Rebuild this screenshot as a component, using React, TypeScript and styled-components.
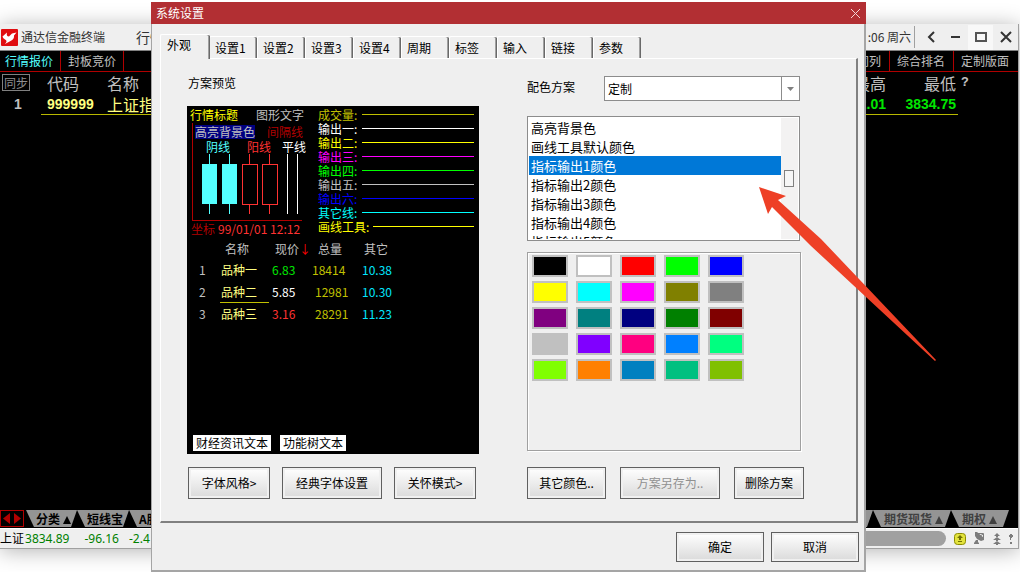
import React, { useState } from "react";
import styled, { createGlobalStyle } from "styled-components";

const GlobalStyle = createGlobalStyle`
  *, *::before, *::after { box-sizing: border-box; }
  body {
    margin: 0;
    background: #fff;
    font-family: "Noto Sans CJK SC", "Liberation Sans", sans-serif;
    font-size: 12px;
    line-height: 14px;
    color: #000;
  }
  button, select { font: inherit; color: inherit; margin: 0; border-radius: 0; }
`;

const Page = styled.div`
  position: relative;
  display: flow-root;
  min-height: 100vh;
  overflow: hidden;
`;

/* ---------- terminal window ---------- */

const Terminal = styled.main`
  display: flex;
  flex-direction: column;
  min-height: calc(100vh - 47px);
  margin: 24px 1px 23px 0;
  background: #000;
  border-right: 1px solid #a0a0a0;
  border-bottom: 1px solid #a0a0a0;
  box-shadow: 0 2px 20px rgba(0, 0, 0, 0.3);
`;

const Split = styled.div`
  display: flex;
  justify-content: space-between;
`;

const Caption = styled(Split)`
  height: 27px;
  background: #efefef;
  color: #333;
  border-bottom: 1px solid #808080;
`;

const CaptionGroup = styled.div`
  display: flex;
  align-items: center;
`;

const Brand = styled.span`
  display: flex;
  align-items: center;
  gap: 3px;
  padding-left: 1px;
  margin-right: 31px;
`;

const MenuText = styled.span`
  font-size: 14px;
`;

const Clock = styled.span`
  padding-right: 3px;
  margin-right: 3px;
  border-right: 1px solid #a0a0a0;
  line-height: 22px;
`;

const CaptionButton = styled.button<{ $lit?: boolean }>`
  display: grid;
  place-items: center;
  width: 25px;
  height: 25px;
  padding: 0;
  border: 0;
  background: ${(p) => (p.$lit ? "#f8f8f8" : "transparent")};
`;

const ViewBar = styled(Split)`
  height: 21px;
  border-bottom: 1px solid #b00000;
`;

const ViewGroup = styled.div<{ $end?: boolean }>`
  display: flex;
  padding-right: ${(p) => (p.$end ? 1 : 0)}px;
`;

const ViewTab = styled.button<{ $active?: boolean; $side: "left" | "right" }>`
  padding: ${(p) => (p.$side === "left" ? "0 7px 0 5px" : "0 8px 0 7px")};
  border: 0 solid #b00000;
  border-right-width: ${(p) => (p.$side === "left" ? 1 : 0)}px;
  border-left-width: ${(p) => (p.$side === "right" ? 1 : 0)}px;
  background: none;
  color: ${(p) => (p.$active ? "#54ffff" : "#c0c0c0")};
  & + & { padding-left: 7px; }
`;

const Quotes = styled.table`
  width: 100%;
  table-layout: fixed;
  border-collapse: separate;
  border-spacing: 0;
  font-size: 16px;
  line-height: 16px;
  color: #c0c0c0;
  th, td {
    height: 21px;
    padding: 0;
    font-weight: 400;
    text-align: left;
    vertical-align: middle;
    white-space: nowrap;
  }
  tbody td { height: 22px; border-bottom: 1px solid #b8b800; }
  tbody td:first-child, tbody td:last-child { border-bottom-color: transparent; }
`;

const Col = styled.col<{ $w?: number }>`
  width: ${(p) => (p.$w ? p.$w + "px" : "auto")};
`;

const CodeHead = styled.th`
  && { padding-left: 6px; }
`;

const CodeCell = styled.td`
  && { padding-left: 6px; }
`;

const NumHead = styled.th`
  && { text-align: right; padding-right: 2px; }
`;

const NumCell = styled.td`
  && { text-align: right; padding-right: 2px; }
`;

const IndexCell = styled.td`
  && { padding-left: 14px; }
`;

const NameCell = styled.td`
  color: #ffff80;
`;

const Digits = styled.span<{ $color: string }>`
  display: block;
  font-family: "Liberation Sans", sans-serif;
  font-size: 14px;
  font-weight: 700;
  color: ${(p) => p.$color};
`;

const HelpMark = styled.span`
  display: block;
  padding-left: 3px;
  font-family: "Liberation Mono", monospace;
  font-size: 13px;
  font-weight: 700;
`;

const SyncButton = styled.button`
  display: block;
  height: 17px;
  margin-left: 2px;
  padding: 0 1px;
  border: 1px solid #808080;
  background: none;
  color: #909090;
  font-size: 12px;
  line-height: 14px;
`;

const Grow = styled.div`
  flex: 1;
`;

const SheetBar = styled(Split)`
  height: 18px;
  padding-bottom: 1px;
`;

const SheetGroup = styled.div<{ $end?: boolean }>`
  display: flex;
  padding-right: ${(p) => (p.$end ? 9 : 0)}px;
`;

const Pager = styled.span`
  display: flex;
  width: 24px;
  margin-right: 2px;
  border: 1px solid #b00000;
  button { flex: 1; padding: 0; border: 0; background: none; display: grid; place-items: center; }
`;

const SheetTab = styled.button<{ $dim?: boolean }>`
  height: 17px;
  padding: ${(p) => (p.$dim ? "0 8px 0 11px" : "0 6px 0 10px")};
  border: 0;
  background: #949494;
  clip-path: polygon(0 0, 100% 0, calc(100% - 6px) 100%, 8px 100%);
  color: ${(p) => (p.$dim ? "#404040" : "#000")};
  font-weight: 700;
  line-height: 17px;
  white-space: nowrap;
  &:last-child { padding-right: 12px; }
`;

const Triangle = styled.span`
  display: inline-block;
  margin-left: 3px;
  border: 4px solid transparent;
  border-top: 0;
  border-bottom: 8px solid currentColor;
`;

const StatusBar = styled(Split)`
  align-items: center;
  height: 20px;
  background: #efefef;
  border-top: 1px solid #fff;
`;

const StatusText = styled.div`
  display: flex;
  color: #008000;
  font-family: "Noto Sans", "Noto Sans CJK SC", sans-serif;
  white-space: nowrap;
`;

const StatusItem = styled.span<{ $gap?: number; $color?: string }>`
  padding-right: ${(p) => p.$gap ?? 0}px;
  color: ${(p) => p.$color ?? "inherit"};
`;

const StatusTools = styled.div`
  display: flex;
  align-items: center;
  gap: 8px;
  padding-right: 5px;
`;

const Marquee = styled.div`
  width: 120px;
  height: 15px;
  border-radius: 8px;
  background: #a0a0a0;
`;

/* ---------- settings dialog ---------- */

const Dialog = styled.section`
  position: absolute;
  top: 2px;
  left: 151px;
  right: 154px;
  min-width: 715px;
  background: #efefef;
  border: solid #a5a5a5;
  border-width: 0 2px 2px 1px;
`;

const DialogTitle = styled.header`
  display: flex;
  align-items: center;
  justify-content: space-between;
  height: 22px;
  margin: 0 -2px 0 -1px;
  padding: 0 5px;
  background: #b22f33;
  color: #fff;
  h1 { margin: 0; font-size: 12px; font-weight: 400; }
  button { display: grid; padding: 0; border: 0; background: none; }
`;

const TabStrip = styled.div`
  display: flex;
  align-items: flex-end;
  height: 34px;
  padding-left: 8px;
`;

const Tab = styled.button<{ $active?: boolean }>`
  position: relative;
  z-index: ${(p) => (p.$active ? 1 : 0)};
  width: ${(p) => (p.$active ? 50 : 48)}px;
  height: ${(p) => (p.$active ? 25 : 22)}px;
  margin-bottom: ${(p) => (p.$active ? -1 : 0)}px;
  padding: 0 0 ${(p) => (p.$active ? 4 : 0)}px ${(p) => (p.$active ? 6 : 5)}px;
  border: solid #fff;
  border-width: 1px 0 0 1px;
  border-radius: 2px 2px 0 0;
  background: #efefef;
  box-shadow: inset -1px 0 #696969, inset -2px 0 #a0a0a0;
  text-align: left;
  &:first-child { margin-right: -1px; }
`;

const Panel = styled.div`
  display: grid;
  grid-template-columns: minmax(292px, 1fr) 277px;
  gap: 48px;
  margin: 0 6px 0 8px;
  padding: 15px 52px 22px 26px;
  border: solid;
  border-width: 1px 2px 2px 1px;
  border-color: #fff #808080 #808080 #fff;
`;

const Column = styled.div`
  display: flex;
  flex-direction: column;
`;

const SectionLabel = styled.h2`
  margin: 0 0 14px 1px;
  font-size: 12px;
  font-weight: 400;
  line-height: 18px;
`;

const ButtonRow = styled.div<{ $gap: number; $top: number; $inset?: number }>`
  display: flex;
  gap: ${(p) => p.$gap}px;
  margin-top: ${(p) => p.$top}px;
  padding-left: ${(p) => p.$inset ?? 0}px;
`;

const PushButton = styled.button<{ $w: number; $h?: number }>`
  width: ${(p) => p.$w}px;
  height: ${(p) => p.$h ?? 32}px;
  padding: 0 0 1px;
  border: 1px solid #606060;
  background: linear-gradient(#fff, #dadada);
  box-shadow: inset 0 0 0 2px #f0f0f0;
  white-space: nowrap;
  &:disabled { color: #909090; }
`;

const DialogFooter = styled.footer`
  display: flex;
  justify-content: flex-end;
  gap: 7px;
  padding: 9px 5px 8px;
`;

/* ---------- preview ---------- */

const Preview = styled.div`
  display: flex;
  flex-direction: column;
  min-height: 348px;
  padding: 2px 5px 3px 3px;
  background: #000;
  color: #c0c0c0;
  white-space: nowrap;
`;

const PreviewTop = styled.div`
  display: grid;
  grid-template-columns: 128px 1fr;
`;

const Inline = styled.div<{ $gap: number; $left?: number }>`
  display: flex;
  gap: ${(p) => p.$gap}px;
  padding-left: ${(p) => p.$left ?? 0}px;
`;

const Ink = styled.span<{ $color: string }>`
  color: ${(p) => p.$color};
`;

const Highlight = styled.span`
  background: #000080;
`;

const CandleBox = styled.div`
  width: 110px;
  margin: 1px 0 1px 2px;
  padding-top: 2px;
  border: solid #b00000;
  border-width: 0 0 1px 1px;
  svg { display: block; margin-bottom: 5px; }
`;

const CandleLabels = styled.div`
  display: grid;
  grid-template-columns: 41px 35px 24px;
  padding: 1px 0 0 13px;
`;

const Legend = styled.div`
  display: flex;
  flex-direction: column;
`;

const LegendRow = styled.div<{ $color: string }>`
  display: flex;
  align-items: center;
  gap: 4px;
  color: ${(p) => p.$color};
  &::after {
    content: "";
    flex: 1;
    height: 1px;
    margin-bottom: 1px;
    background: currentColor;
  }
`;

const LegendText = styled.span`
  min-width: 40px;
`;

const PreviewTable = styled.table`
  width: 200px;
  margin: 3px 0 0 9px;
  table-layout: fixed;
  border-collapse: separate;
  border-spacing: 0;
  th { height: 20px; padding: 0; font-weight: 400; }
  td { height: 22px; padding: 0; }
`;

const PCell = styled.td<{ $color?: string; $marked?: boolean; $left?: number }>`
  && {
    padding-left: ${(p) => p.$left ?? 0}px;
    color: ${(p) => p.$color ?? "#c0c0c0"};
    border-bottom: 1px solid ${(p) => (p.$marked ? "#c0c000" : "transparent")};
  }
`;

const PHead = styled.th<{ $left: number }>`
  && { padding-left: ${(p) => p.$left}px; text-align: left; }
`;

const TagRow = styled.div`
  display: flex;
  gap: 9px;
  margin-top: auto;
  padding-left: 3px;
`;

const Tag = styled.span`
  padding: 1px 3px;
  background: #fff;
  color: #000;
`;

/* ---------- colour scheme side ---------- */

const SchemeRow = styled.div`
  display: flex;
  align-items: center;
  width: 273px;
  height: 25px;
  margin: 2px 0 15px;
  label { width: 77px; padding-bottom: 3px; }
`;

const DropWrap = styled.div`
  position: relative;
  flex: 1;
  height: 25px;
  svg { position: absolute; top: 1px; right: 1px; pointer-events: none; }
`;

const Drop = styled.select`
  appearance: none;
  width: 100%;
  height: 100%;
  padding: 0 20px 0 3px;
  border: 1px solid #8c8c8c;
  background: #fff;
  outline: 0;
`;

const ListFrame = styled.div`
  display: flex;
  width: 273px;
  height: 125px;
  padding: 1px;
  border: 1px solid #8c8c8c;
  background: #fff;
`;

const ItemList = styled.select`
  appearance: none;
  flex: 1;
  height: 121px;
  padding: 0;
  border: 0;
  outline: 0;
  overflow: hidden;
  background: #fff;
  font-size: 13px;
  scrollbar-width: none;
  option { height: 19px; min-height: 19px; padding: 0 2px; line-height: 19px; }
  option:checked {
    background: #0078d7 linear-gradient(#0078d7, #0078d7);
    -webkit-text-fill-color: #fff;
  }
`;

const ScrollTrack = styled.div`
  width: 17px;
  padding: 52px 4px 0 3px;
  background: #f3f2f2;
  &::before {
    content: "";
    display: block;
    height: 17px;
    border: 1px solid #808080;
    background: #f6f6f6;
  }
`;

const Palette = styled.div`
  display: grid;
  grid-template-columns: repeat(5, 36px);
  grid-auto-rows: 22px;
  gap: 4px 8px;
  width: 274px;
  height: 199px;
  margin-top: 11px;
  padding: 2px 4px;
  border: 1px solid #a0a0a0;
  box-shadow: 1px 1px #fff, inset 1px 1px #fff;
`;

const Swatch = styled.button<{ $color: string }>`
  padding: 0;
  border: 2px solid #c0c0c0;
  background: ${(p) => p.$color};
`;

const PointerArrow = styled.svg`
  position: absolute;
  top: 184px;
  left: 606px;
  pointer-events: none;
`;

const tabs = ["外观", "设置1", "设置2", "设置3", "设置4", "周期", "标签", "输入", "链接", "参数"];

const legend: [string, string][] = [
  ["成交量:", "#c0c000"],
  ["输出一:", "#ffffff"],
  ["输出二:", "#ffff00"],
  ["输出三:", "#ff00ff"],
  ["输出四:", "#00ff00"],
  ["输出五:", "#c0c0c0"],
  ["输出六:", "#0000ff"],
  ["其它线:", "#00ffff"],
  ["画线工具:", "#ffff00"],
];

const rows = [
  { name: "品种一", price: "6.83", color: "#00e600", volume: "18414", other: "10.38" },
  { name: "品种二", price: "5.85", color: "#ffffff", volume: "12981", other: "10.30" },
  { name: "品种三", price: "3.16", color: "#ff3232", volume: "28291", other: "11.23" },
];

const items = [
  "高亮背景色",
  "画线工具默认颜色",
  "指标输出1颜色",
  "指标输出2颜色",
  "指标输出3颜色",
  "指标输出4颜色",
  "指标输出5颜色",
];

const palette = [
  "#000000", "#ffffff", "#ff0000", "#00ff00", "#0000ff",
  "#ffff00", "#00ffff", "#ff00ff", "#808000", "#808080",
  "#800080", "#008080", "#000080", "#008000", "#800000",
  "#c0c0c0", "#8000ff", "#ff0080", "#0080ff", "#00ff80",
  "#80ff00", "#ff8000", "#0080c0", "#00c080", "#80c000",
];

function Logo() {
  return (
    <svg width="17" height="17" viewBox="0 0 17 17" aria-hidden="true">
      <rect width="17" height="17" rx="1" fill="#e00d10" />
      <path
        d="M1.500 7.500 6 3.500Q5 7.500 8 7.500L11 4.500 15.500 3.500 13 6.500Q13.500 10 9.500 12L4 15Q7 12 4 10.500 2 9.500 1.500 7.500Z"
        fill="#fff"
      />
    </svg>
  );
}

function Candles() {
  return (
    <svg width="109" height="61" viewBox="0 0 109 61" shapeRendering="crispEdges" aria-hidden="true">
      <g fill="#54ffff">
        <rect x="9" y="10" width="15" height="40" />
        <rect x="16" y="0" width="1" height="60" />
        <rect x="29" y="10" width="15" height="40" />
        <rect x="36" y="0" width="1" height="60" />
      </g>
      <g fill="none" stroke="#ff3232">
        <rect x="49.5" y="10.5" width="15" height="40" />
        <path d="M56.5 0V10M56.500 51V60" />
        <rect x="69.5" y="10.5" width="15" height="40" />
        <path d="M76.5 0V10M76.500 51V60" />
      </g>
      <path d="M94.5 0V60M104.500 0V60" stroke="#fff" />
    </svg>
  );
}

function TrayIcons() {
  return (
    <>
      <svg width="12" height="12" viewBox="0 0 12 12" aria-hidden="true">
        <rect x="0.500" y="0.500" width="11" height="11" rx="3" fill="#e2e23c" stroke="#8c8c00" />
        <path d="M6 2 9 5H7V7H5V5H3ZM4 8H8V9H4Z" fill="#707000" />
      </svg>
      <svg width="11" height="13" viewBox="0 0 11 13" fill="#7c7c7c" aria-hidden="true">
        <path d="M1 0H3L10 6V8L7 9 3 7 1 4Z" />
        <path d="M4 1.500H9.500V7M5 5 9 2" fill="none" stroke="#7c7c7c" />
        <path d="M2 8H4V10L5 11V12H0V11Z" />
      </svg>
      <svg width="8" height="12" viewBox="0 0 8 12" fill="#7c7c7c" aria-hidden="true">
        <path d="M4 0 7 3H1ZM3 3H5V4H3ZM4 4 8 7H0ZM3 7H5V8H3ZM4 8 8 11H0ZM3 11H5V12H3Z" />
      </svg>
      <svg width="4" height="12" viewBox="0 0 4 12" fill="#7c7c7c" aria-hidden="true">
        <path d="M1 1H3V5H1ZM0 2H4V4H0ZM1 5H2V7H1ZM1 9H3V11H1Z" />
      </svg>
    </>
  );
}

function TerminalWindow() {
  return (
    <Terminal>
      <Caption>
        <CaptionGroup>
          <Brand>
            <Logo />
            通达信金融终端
          </Brand>
          <MenuText>行情</MenuText>
        </CaptionGroup>
        <CaptionGroup>
          <Clock>:06 周六</Clock>
          <CaptionButton aria-label="后退">
            <svg width="8" height="12" fill="none" stroke="#333" strokeWidth="2">
              <path d="M7 1 2 6 7 11" />
            </svg>
          </CaptionButton>
          <CaptionButton aria-label="最小化">
            <svg width="10" height="10" fill="none" stroke="#333" strokeWidth="2">
              <path d="M0 5H9" />
            </svg>
          </CaptionButton>
          <CaptionButton aria-label="最大化" $lit>
            <svg width="12" height="12" fill="none" stroke="#555" strokeWidth="2">
              <rect x="1" y="2" width="10" height="8" />
            </svg>
          </CaptionButton>
          <CaptionButton aria-label="关闭">
            <svg width="12" height="12" fill="none" stroke="#333" strokeWidth="2">
              <path d="M1 1 11 11M11 1 1 11" />
            </svg>
          </CaptionButton>
        </CaptionGroup>
      </Caption>
      <ViewBar>
        <ViewGroup>
          <ViewTab $side="left" $active>行情报价</ViewTab>
          <ViewTab $side="left">封板竞价</ViewTab>
        </ViewGroup>
        <ViewGroup $end>
          <ViewTab $side="right">同列</ViewTab>
          <ViewTab $side="right">综合排名</ViewTab>
          <ViewTab $side="right">定制版面</ViewTab>
        </ViewGroup>
      </ViewBar>
      <Quotes>
        <colgroup>
          <Col $w={41} />
          <Col $w={66} />
          <Col />
          <Col $w={60} />
          <Col $w={70} />
          <Col $w={60} />
        </colgroup>
        <thead>
          <tr>
            <th><SyncButton>同步</SyncButton></th>
            <CodeHead>代码</CodeHead>
            <th>名称</th>
            <NumHead>最高</NumHead>
            <NumHead>最低</NumHead>
            <th><HelpMark>?</HelpMark></th>
          </tr>
        </thead>
        <tbody>
          <tr>
            <IndexCell><Digits $color="#c0c0c0">1</Digits></IndexCell>
            <CodeCell><Digits $color="#ffff80">999999</Digits></CodeCell>
            <NameCell>上证指数</NameCell>
            <NumCell><Digits $color="#00e600">2.01</Digits></NumCell>
            <NumCell><Digits $color="#00e600">3834.75</Digits></NumCell>
            <td />
          </tr>
        </tbody>
      </Quotes>
      <Grow />
      <SheetBar>
        <SheetGroup>
          <Pager>
            <button aria-label="向左">
              <svg width="7" height="11"><path d="M7 0V11L0 5.500Z" fill="#b00000" /></svg>
            </button>
            <button aria-label="向右">
              <svg width="7" height="11"><path d="M0 0V11L7 5.500Z" fill="#b00000" /></svg>
            </button>
          </Pager>
          <SheetTab>分类<Triangle /></SheetTab>
          <SheetTab>短线宝</SheetTab>
          <SheetTab>A股</SheetTab>
        </SheetGroup>
        <SheetGroup $end>
          <SheetTab $dim>其它<Triangle /></SheetTab>
          <SheetTab $dim>期货现货<Triangle /></SheetTab>
          <SheetTab $dim>期权<Triangle /></SheetTab>
        </SheetGroup>
      </SheetBar>
      <StatusBar>
        <StatusText>
          <StatusItem $color="#000" $gap={1}>上证</StatusItem>
          <StatusItem $gap={15}>3834.89</StatusItem>
          <StatusItem $gap={10}>-96.16</StatusItem>
          <StatusItem>-2.4</StatusItem>
        </StatusText>
        <StatusTools>
          <Marquee />
          <TrayIcons />
        </StatusTools>
      </StatusBar>
    </Terminal>
  );
}

function SchemePreview() {
  return (
    <Preview>
      <PreviewTop>
        <div>
          <Inline $gap={18}>
            <Ink $color="#ffff00">行情标题</Ink>
            <span>图形文字</span>
          </Inline>
          <CandleBox>
            <Inline $gap={12} $left={2}>
              <Highlight>高亮背景色</Highlight>
              <Ink $color="#b00000">间隔线</Ink>
            </Inline>
            <CandleLabels>
              <Ink $color="#54ffff">阴线</Ink>
              <Ink $color="#ff3232">阳线</Ink>
              <Ink $color="#ffffff">平线</Ink>
            </CandleLabels>
            <Candles />
          </CandleBox>
          <Inline $gap={3} $left={1}>
            <Ink $color="#b00000">坐标</Ink>
            <Ink $color="#ff3232">99/01/01 12:12</Ink>
          </Inline>
        </div>
        <Legend>
          {legend.map(([text, color]) => (
            <LegendRow key={text} $color={color}>
              <LegendText>{text}</LegendText>
            </LegendRow>
          ))}
        </Legend>
      </PreviewTop>
      <PreviewTable>
        <colgroup>
          <Col $w={21} />
          <Col $w={49} />
          <Col $w={40} />
          <Col $w={50} />
          <Col $w={40} />
        </colgroup>
        <thead>
          <tr>
            <PHead $left={0} aria-label="序号" />
            <PHead $left={5}>名称</PHead>
            <PHead $left={6}>现价<Ink $color="#ff0000">↓</Ink></PHead>
            <PHead $left={9}>总量</PHead>
            <PHead $left={5}>其它</PHead>
          </tr>
        </thead>
        <tbody>
          {rows.map((r, i) => (
            <tr key={r.name}>
              <PCell>{i + 1}</PCell>
              <PCell $color="#ffff80" $marked={i === 1} $left={1}>{r.name}</PCell>
              <PCell $color={r.color} $left={3}>{r.price}</PCell>
              <PCell $color="#c0c000" $left={i === 0 ? 3 : 6}>{r.volume}</PCell>
              <PCell $color="#00e6ff" $left={3}>{r.other}</PCell>
            </tr>
          ))}
        </tbody>
      </PreviewTable>
      <TagRow>
        <Tag>财经资讯文本</Tag>
        <Tag>功能树文本</Tag>
      </TagRow>
    </Preview>
  );
}

function SettingsDialog() {
  const [item, setItem] = useState("指标输出1颜色");
  return (
    <Dialog role="dialog" aria-labelledby="settings-title">
      <DialogTitle>
        <h1 id="settings-title">系统设置</h1>
        <button aria-label="关闭">
          <svg width="11" height="11" fill="none" stroke="#f3d5d6">
            <path d="M1 1 10 10M10 1 1 10" />
          </svg>
        </button>
      </DialogTitle>
      <TabStrip role="tablist">
        {tabs.map((t, i) => (
          <Tab key={t} role="tab" aria-selected={i === 0} $active={i === 0}>{t}</Tab>
        ))}
      </TabStrip>
      <Panel role="tabpanel">
        <Column>
          <SectionLabel>方案预览</SectionLabel>
          <SchemePreview />
          <ButtonRow $gap={12} $top={13} $inset={1}>
            <PushButton $w={82}>字体风格&gt;</PushButton>
            <PushButton $w={100}>经典字体设置</PushButton>
            <PushButton $w={82}>关怀模式&gt;</PushButton>
          </ButtonRow>
        </Column>
        <Column>
          <SchemeRow>
            <label htmlFor="scheme">配色方案</label>
            <DropWrap>
              <Drop id="scheme" defaultValue="定制">
                <option>定制</option>
              </Drop>
              <svg width="18" height="23" viewBox="0 0 18 23" aria-hidden="true">
                <path d="M0.500 0V23" stroke="#8c8c8c" />
                <path d="M6 10H13L9.500 14Z" fill="#808080" />
              </svg>
            </DropWrap>
          </SchemeRow>
          <ListFrame>
            <ItemList size={6} value={item} onChange={(e) => setItem(e.target.value)} aria-label="颜色项目">
              {items.map((t) => (
                <option key={t}>{t}</option>
              ))}
            </ItemList>
            <ScrollTrack />
          </ListFrame>
          <Palette>
            {palette.map((c) => (
              <Swatch key={c} $color={c} aria-label={c} />
            ))}
          </Palette>
          <ButtonRow $gap={14} $top={16}>
            <PushButton $w={79}>其它颜色..</PushButton>
            <PushButton $w={100} disabled>方案另存为..</PushButton>
            <PushButton $w={70}>删除方案</PushButton>
          </ButtonRow>
        </Column>
      </Panel>
      <DialogFooter>
        <PushButton $w={88} $h={30}>确定</PushButton>
        <PushButton $w={88} $h={30}>取消</PushButton>
      </DialogFooter>
      <PointerArrow width="182" height="178" viewBox="0 0 182 178" aria-hidden="true">
        <path d="M1 1 28 10 20 14 63 53 178 174 177 175 53 60 14 21 10 28Z" fill="#ee4026" />
      </PointerArrow>
    </Dialog>
  );
}

export default function App() {
  return (
    <>
      <GlobalStyle />
      <Page>
        <TerminalWindow />
        <SettingsDialog />
      </Page>
    </>
  );
}
